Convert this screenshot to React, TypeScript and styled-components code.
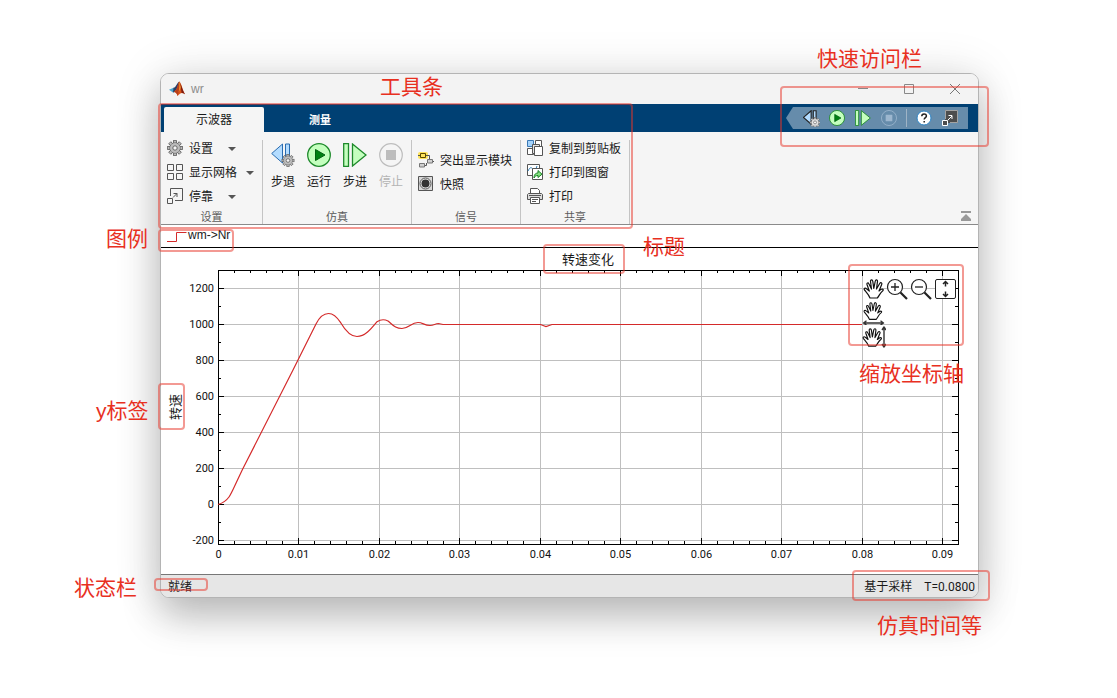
import React from "react";
import styled, { createGlobalStyle } from "styled-components";

const Global = createGlobalStyle`
  * { box-sizing: border-box; }
  body { margin: 0; background: #fff; font-family: "Liberation Sans", "Noto Sans CJK SC", sans-serif; font-size: 12px; color: #1a1a1a; }
  button { font: inherit; color: inherit; border: 0; background: none; padding: 0; cursor: pointer; }
  svg { display: block; }
`;

const Page = styled.main`
  position: relative;
  padding: 73px 138px 100px 160px;
  overflow: hidden;
`;

const Window = styled.section`
  border: 1px solid #b4b4b4;
  border-radius: 9px;
  background: #fff;
  overflow: hidden;
  box-shadow: 0 20px 38px rgba(0, 0, 0, 0.22), 0 2px 48px rgba(0, 0, 0, 0.13);
`;

const TitleBar = styled.header`
  display: flex;
  align-items: center;
  height: 30px;
  padding-left: 8px;
  gap: 6px;
  background: #f3f3f3;
`;

const WindowTitle = styled.h1`
  flex: 1;
  margin: 0;
  font-size: 12px;
  font-weight: 400;
  color: #8c8c8c;
`;

const WindowButtons = styled.div`
  display: flex;
`;

const WindowButton = styled.button`
  display: grid;
  place-items: center;
  width: 46px;
  height: 30px;
`;

const TabStrip = styled.div`
  display: flex;
  align-items: flex-end;
  height: 28px;
  padding: 0 10px 0 3px;
  background: #004073;
`;

const Tab = styled.button<{ $active?: boolean }>`
  width: ${(p) => (p.$active ? 100 : 112)}px;
  height: 25px;
  padding-bottom: 2px;
  border-radius: 2px 2px 0 0;
  background: ${(p) => (p.$active ? "#f5f5f5" : "transparent")};
  color: ${(p) => (p.$active ? "#1a1a1a" : "#fff")};
  font-size: ${(p) => (p.$active ? 12 : 11)}px;
  font-weight: ${(p) => (p.$active ? 400 : 700)};
`;

const QuickAccess = styled.div`
  display: flex;
  align-items: center;
  align-self: center;
  height: 22px;
  margin-left: auto;
  padding: 0 5px 0 12px;
  background: #668cab;
  clip-path: polygon(0 50%, 7px 0, 100% 0, 100% 100%, 7px 100%);
`;

const QuickButton = styled.button`
  display: grid;
  place-items: center;
  width: 26px;
  height: 22px;
`;

const QuickDivider = styled.span`
  width: 1px;
  height: 18px;
  margin: 0 4px;
  background: #9fb4c6;
`;

const Ribbon = styled.div`
  display: flex;
  align-items: stretch;
  height: 93px;
  background: #f5f5f5;
  border-bottom: 1px solid #8a8a8a;
`;

const Group = styled.section<{ $width: number }>`
  display: flex;
  flex-direction: column;
  width: ${(p) => p.$width}px;
  margin-top: 8px;
  border-right: 1px solid #c4c4c4;
`;

const GroupBody = styled.div<{ $pad: number; $row?: boolean }>`
  display: flex;
  flex: 1;
  flex-direction: ${(p) => (p.$row ? "row" : "column")};
  justify-content: ${(p) => (p.$row ? "flex-start" : "center")};
  margin-top: -4px;
  padding-left: ${(p) => p.$pad}px;
`;

const GroupName = styled.h2`
  height: 16px;
  margin: 0;
  line-height: 18px;
  font-size: 11px;
  font-weight: 400;
  text-align: center;
  color: #5c5c5c;
`;

const Command = styled.button`
  display: flex;
  align-items: center;
  gap: 6px;
  height: 24px;
  white-space: nowrap;
`;

const CommandLabel = styled.span`
  padding-bottom: 2px;
`;

const Caret = styled.span<{ $far?: boolean }>`
  margin: 2px 0 0 ${(p) => (p.$far ? 9 : 3)}px;
  border: 4px solid transparent;
  border-top-color: #555;
  border-bottom: 0;
`;

const BigCommand = styled.button`
  display: flex;
  flex-direction: column;
  align-items: center;
  gap: 7px;
  width: 36px;
  padding-top: 7px;
  line-height: 16px;
  white-space: nowrap;
  &:disabled { color: #b4b4b4; }
`;

const Collapse = styled.button`
  align-self: flex-end;
  margin: 0 6px 3px auto;
`;

const Legend = styled.div`
  display: flex;
  align-items: flex-start;
  height: 23px;
  padding: 3px 0 0 6px;
  line-height: 14px;
  border-bottom: 1px solid #000;
`;

const Scope = styled.figure`
  position: relative;
  display: grid;
  grid-template-columns: 30px 1fr;
  margin: 0;
`;

const ScopeTitle = styled.figcaption`
  grid-column: 2;
  padding: 2px 20px 0 27px;
  height: 20px;
  line-height: 20px;
  font-size: 13px;
  text-align: center;
`;

const AxisName = styled.span`
  align-self: center;
  justify-self: center;
  margin-bottom: 28px;
  writing-mode: vertical-rl;
  text-orientation: sideways;
  transform: rotate(180deg);
  font-size: 13px;
  line-height: 20px;
`;

const Plot = styled.svg`
  width: 100%;
  height: auto;
  overflow: visible;
  text { font-family: Roboto, "Liberation Sans", sans-serif; font-size: 11px; fill: #111; }
`;

const AxesTools = styled.div`
  position: absolute;
  top: 29px;
  right: 20px;
  display: grid;
  grid-template-columns: repeat(4, 24px);
  grid-auto-rows: 24px;
`;

const AxesTool = styled.button<{ $first?: boolean }>`
  grid-column: ${(p) => (p.$first ? 1 : "auto")};
  display: grid;
  place-items: center;
`;

const StatusBar = styled.footer`
  display: flex;
  align-items: center;
  height: 23px;
  padding: 0 3px 2px 7px;
  gap: 12px;
  border-top: 1px solid #777;
  background: #e6e6e6;
  font-family: Roboto, "Noto Sans CJK SC", sans-serif;
`;

const StatusText = styled.span<{ $grow?: boolean }>`
  flex: ${(p) => (p.$grow ? 1 : "none")};
`;

const StatusGroup = styled.div`
  display: flex;
  align-items: baseline;
  gap: 12px;
`;

type Place = { $top: number; $left?: number; $right?: number };

const Frame = styled.div<Place & { $w: number; $h: number }>`
  position: absolute;
  top: ${(p) => p.$top}px;
  ${(p) => (p.$right !== undefined ? `right: ${p.$right}px;` : `left: ${p.$left}px;`)}
  width: ${(p) => p.$w}px;
  height: ${(p) => p.$h}px;
  border: 2px solid rgba(232, 52, 40, 0.5);
  border-radius: 4px;
  pointer-events: none;
`;

const Note = styled.span<Place>`
  position: absolute;
  top: ${(p) => p.$top}px;
  ${(p) => (p.$right !== undefined ? `right: ${p.$right}px;` : `left: ${p.$left}px;`)}
  font-size: 21px;
  line-height: 28px;
  white-space: nowrap;
  color: #e8301f;
  pointer-events: none;
`;

const gearTeeth = [0, 45, 90, 135, 180, 225, 270, 315];

const GearShape = ({ cx, cy, s = 1, fill = "#bdbdbd" }: { cx: number; cy: number; s?: number; fill?: string }) => (
  <g transform={`translate(${cx} ${cy}) scale(${s})`}>
    {gearTeeth.map((a) => (
      <rect key={a} x="-1.5" y="-7.4" width="3" height="4" fill={fill} stroke="#666" strokeWidth=".9" transform={`rotate(${a})`} />
    ))}
    <circle r="5.2" fill={fill} stroke="#666" strokeWidth=".9" />
    <circle r="4.8" fill={fill} />
    <circle r="2.2" fill="#f5f5f5" stroke="#666" />
  </g>
);

const Gear = () => (
  <svg width="16" height="16" viewBox="0 0 16 16"><GearShape cx={8} cy={8} /></svg>
);

const GridIcon = () => (
  <svg width="16" height="16" fill="none" stroke="#555">
    <path d="M.5 .5h6v6h-6zM9.500 .5h6v6h-6zM.5 9.500h6v6h-6zM9.500 9.500h6v6h-6z" />
  </svg>
);

const Dock = () => (
  <svg width="16" height="16" fill="none" stroke="#555">
    <path d="M3.500 8V.5h12v12H8M.5 10.500h5v5h-5zM6 9.500l4-4M6.500 5.500H10V9" />
  </svg>
);

const StepBack = ({ size = 24, quick }: { size?: number; quick?: boolean }) => (
  <svg width={size} height={size} viewBox="0 0 24 24">
    <path d="M.7 10.500 11.500 1v19z" fill="#b3dcff" stroke={quick ? "#222" : "#2a6cb0"} strokeWidth={quick ? 1.6 : 1} />
    <path d="M14.500 1h4v14h-4z" fill="#b3dcff" stroke={quick ? "#222" : "#2a6cb0"} strokeWidth={quick ? 1.6 : 1} />
    <GearShape cx={17} cy={17.500} s={quick ? 0.95 : 0.82} fill={quick ? "#e2e2e2" : "#bdbdbd"} />
  </svg>
);

const Run = ({ size = 24 }: { size?: number }) => (
  <svg width={size} height={size} viewBox="0 0 24 24">
    <circle cx="12" cy="12" r="11.300" fill="#c4ffbe" stroke="#1e8a2b" strokeWidth="1.300" />
    <path d="M8.500 6.500v11l9.500-5.500z" fill="#008013" stroke="#006010" />
  </svg>
);

const StepForward = ({ size = 24 }: { size?: number }) => (
  <svg width={size} height={size} viewBox="0 0 24 24" fill="#c4ffbe" stroke="#1e8a2b" strokeWidth="1.300">
    <path d="M.7 .7h4.800v22.600H.7zM9.500 1v22L23 12z" />
  </svg>
);

const Stop = ({ size = 24, color = "#bdbdbd" }: { size?: number; color?: string }) => (
  <svg width={size} height={size} viewBox="0 0 24 24">
    <circle cx="12" cy="12" r="11.300" fill="none" stroke={color} strokeWidth="1.200" />
    <path d="M7 7h10v10H7z" fill={color} />
  </svg>
);

const Highlight = () => (
  <svg width="16" height="16" viewBox="0 0 16 16">
    <rect x="0" y="0" width="10" height="7" rx="2" fill="#ffe45c" />
    <path d="M0 3.500h2M8 3.500h3.500V8M15 9.500h1M6 13.500h2.500V11" fill="none" stroke="#555" />
    <path d="M2.500 1.500h5v4h-5z" fill="#ffe45c" stroke="#5a4a00" />
    <path d="M9.500 7.500h5v3.500h-5zM1.500 11.500h5v3.500h-5z" fill="#d0d0d0" stroke="#777" />
  </svg>
);

const Snapshot = () => (
  <svg width="16" height="16" viewBox="0 0 16 16">
    <path d="M.5 .5h14v14H.5z" fill="#d9d9d9" stroke="#555" />
    <circle cx="7.500" cy="7.500" r="5.500" fill="#eee" stroke="#555" />
    <circle cx="7.500" cy="7.500" r="4" fill="#333" />
  </svg>
);

const CopyIcon = () => (
  <svg width="16" height="16" viewBox="0 0 16 16" stroke="#555">
    <path d="M.5 .5h6v6h-6z" fill="#a5d3fb" stroke="#3a78b4" />
    <path d="M8.500 .5h6v6h-6zM.5 8.500h6v6h-6z" fill="#fff" />
    <path d="M5.500 4.500h7v9h-7z" fill="#e4e4e4" />
    <path d="M7.500 6.500h8v9h-8z" fill="#fff" />
  </svg>
);

const PrintFigure = () => (
  <svg width="16" height="16" viewBox="0 0 16 16" fill="none">
    <path d="M.5 .5h12v11H.5z" fill="#fff" stroke="#555" />
    <path d="M1 7c2-4 3-4 5-2s3 0 4-3" stroke="#2a7bb5" />
    <path d="M5.500 4.500h10v11h-10z" fill="#fff" stroke="#555" />
    <path d="M7 14c0-4 2-5 4-5V6.500l4 3.700-4 3.300v-2c-2 0-3 .5-4 2.500z" fill="#84e07f" stroke="#168023" />
  </svg>
);

const Printer = () => (
  <svg width="16" height="16" viewBox="0 0 16 16" stroke="#555" fill="#fff">
    <path d="M3.500 5.500v-5h7l2 2v3" />
    <path d="M1.500 5.500h13l1 1v5H.5v-5z" fill="#dcdcdc" />
    <path d="M3.500 9.500h9v6h-9zM5 11.500h6M5 13.500h4M2 7.500h12" />
  </svg>
);

const Help = () => (
  <svg width="16" height="16" viewBox="0 0 16 16">
    <circle cx="8" cy="8" r="7" fill="#fff" stroke="#2d83c4" />
    <path d="M5.800 6.200c0-3 4.600-2.900 4.600-.3 0 1.700-2.200 1.700-2.200 3.600M8.200 11v1.600" fill="none" stroke="#222" strokeWidth="1.500" />
  </svg>
);

const Undock = () => (
  <svg width="16" height="16" viewBox="0 0 16 16">
    <path d="M3 0h13v13H3z" fill="#4d4d4d" />
    <path d="M3.500 9V.5h12v12H8" fill="none" stroke="#ddd" strokeOpacity=".6" />
    <path d="M6 10l4-4M6.500 5.500H10V9" fill="none" stroke="#fff" />
    <path d="M.5 10.500h5v5h-5z" fill="#4d4d4d" stroke="#fff" />
  </svg>
);

const Logo = () => (
  <svg width="16" height="16" viewBox="0 0 16 16">
    <path d="M0 8.700 4.500 6.800 7 8.300 4 11.500z" fill="#4aa6cf" />
    <path d="M4.500 6.800C7 6.500 8 2 10.200.5L9 6 5.500 11.200 4 11.500z" fill="#2b3f66" />
    <path d="M10.200.5C12.500 2 13.500 9 16 13.200c-3-2-4.500-1.500-7.500 1.800-.5-2.200-1.500-3.500-3.500-4.200C8 9.500 9 3 10.200.5z" fill="#d95319" />
    <path d="M10.200.5C10.800 4 10.300 10 8.500 15 8 12.500 7 11.500 5 10.800 8 9.500 9 3 10.200.5z" fill="#b8401c" />
    <path d="M10.200.5c.5 3 .3 7-.5 10.500L12 6z" fill="#f7a531" />
    <path d="M11.200 2C12.500 5 13.800 10 16 13.200c-1.300-.9-2.400-1.300-3.400-1.200z" fill="#7e1c10" />
  </svg>
);

const handPath = "M7 20c-1-3-3-5-5.500-8-1-1.500.7-2.500 2-1.300L6.300 13 4 6.500C3.500 4.800 5.300 4.300 6 6l2.500 5-1-7.500C7.300 1.500 9.500 1.300 9.800 3.300l1 7L12.300 3c.4-1.800 2.400-1.400 2.200.4L13.500 11l3.200-5.500c1-1.500 2.700-.6 2 1L16 13c1-1 2-2 3.300-2 1.500.2 1 1.600 0 2.200-2 1.300-3 4.500-5 6.800z";

const Hand = ({ axis }: { axis?: "x" | "y" }) => (
  <svg width="24" height="24" viewBox="0 0 24 24" fill="#fff" stroke="#111" strokeWidth="1.200" strokeLinejoin="round">
    {axis ? (
      <g transform={axis === "x" ? "translate(1 0) scale(.92)" : "translate(0 2) scale(.96)"}><path d={handPath} /></g>
    ) : (
      <g transform="translate(1 1)"><path d={handPath} /></g>
    )}
    {axis === "x" && <path d="M1.500 22h20M4.500 19.800 1.500 22l3 2M18.500 19.800l3 2.200-3 2" fill="none" stroke="#333" strokeWidth="1.400" />}
    {axis === "y" && <path d="M22 2v20M20 5l2-3 2 3M20 19l2 3 2-3" fill="none" stroke="#333" strokeWidth="1.400" />}
  </svg>
);

const Magnifier = ({ plus }: { plus?: boolean }) => (
  <svg width="24" height="24" viewBox="0 0 24 24" fill="none" stroke="#222">
    <circle cx="9" cy="10" r="7.500" fill="#fff" strokeWidth="1.200" />
    <path d={plus ? "M5 10h8M9 6v8" : "M5 10h8"} strokeWidth="1.300" />
    <path d="M14.500 15.500 21 22" strokeWidth="2.200" />
  </svg>
);

const Fit = () => (
  <svg width="24" height="24" viewBox="0 0 24 24" fill="none" stroke="#222">
    <rect x="1.500" y="2.500" width="20" height="19" rx="1.500" fill="#fff" />
    <path d="M11.500 4.500v5M9 7l2.500-2.500L14 7M11.500 14.500v5M9 17l2.500 2.500L14 17" strokeWidth="1.500" />
  </svg>
);

const AX = { left: 27, right: 767, top: 2, bottom: 276 };
const xAt = (i: number) => Math.floor(AX.left + (i * 80.5) / 5) + 0.5;
const yAt = (v: number) => 236 - (v * 36) / 200 + 0.5;
const xSteps = Array.from({ length: 46 }, (_, i) => i);
const ySteps = Array.from({ length: 15 }, (_, i) => -200 + i * 100);

const signal =
  "M27 236.500C31 235.500 35 233 38 229C41 225 43 219 51.700 201L102 102L125 56C129 48 133 45.500 137.500 45.500C142 45.500 146 49 149.700 54.700C154 62 159 68.500 166 68.500C174 68.500 180 61 186 53.700C191 50.500 194 51.500 197 53C202 57 204 60.500 211 60.500C218 60.500 220 54.500 227 54.500C232 54.500 233 57.500 239 57.500C243 57.500 244 55.500 247.500 55.500L252 56.500H349.500L355 58.500L361 56.500H671";

const Chart = () => (
  <Plot viewBox="0 0 787 306" role="img" aria-label="转速变化">
    <g stroke="#bfbfbf" shapeRendering="crispEdges">
      {xSteps.filter((i) => i % 5 === 0 && i > 0).map((i) => <path key={i} d={`M${xAt(i)} ${AX.top}V${AX.bottom}`} />)}
      {ySteps.filter((v) => v % 200 === 0).map((v) => <path key={v} d={`M${AX.left} ${yAt(v)}H${AX.right}`} />)}
    </g>
    <g stroke="#000" fill="none" shapeRendering="crispEdges">
      <path d="M27.500 2.500H767.500V276.500H27.500z" />
      {xSteps.map((i) => {
        const n = i % 5 === 0 ? 6 : 3;
        return <path key={i} d={`M${xAt(i)} ${AX.top}v${n}M${xAt(i)} ${AX.bottom}v-${n}`} />;
      })}
      {ySteps.map((v) => {
        const n = v % 200 === 0 ? 6 : 3;
        return <path key={v} d={`M${AX.left} ${yAt(v)}h${n}M${AX.right} ${yAt(v)}h-${n}`} />;
      })}
    </g>
    <path d={signal} fill="none" stroke="#d42a2a" strokeWidth="1.200" />
    {xSteps.filter((i) => i % 5 === 0).map((i) => (
      <text key={i} x={xAt(i)} y="290" textAnchor="middle">{i === 0 ? "0" : `0.0${i / 5}`}</text>
    ))}
    {ySteps.filter((v) => v % 200 === 0).map((v) => (
      <text key={v} x="23" y={yAt(v) + 3.500} textAnchor="end">{v}</text>
    ))}
  </Plot>
);

export default function App() {
  return (
    <>
      <Global />
      <Page>
        <Window>
          <TitleBar>
            <Logo />
            <WindowTitle>wr</WindowTitle>
            <WindowButtons>
              <WindowButton aria-label="最小化"><svg width="10" height="10" stroke="#888"><path d="M0 4.500h10" /></svg></WindowButton>
              <WindowButton aria-label="最大化"><svg width="10" height="10" fill="none" stroke="#888"><path d="M.5 .5h9v9h-9z" /></svg></WindowButton>
              <WindowButton aria-label="关闭"><svg width="10" height="10" stroke="#777"><path d="M0 0l10 10M10 0 0 10" /></svg></WindowButton>
            </WindowButtons>
          </TitleBar>
          <TabStrip>
            <Tab $active>示波器</Tab>
            <Tab>测量</Tab>
            <QuickAccess>
              <QuickButton aria-label="步退"><StepBack size={17} quick /></QuickButton>
              <QuickButton aria-label="运行"><Run size={16} /></QuickButton>
              <QuickButton aria-label="步进"><StepForward size={16} /></QuickButton>
              <QuickButton aria-label="停止" disabled><Stop size={16} color="#9db7cf" /></QuickButton>
              <QuickDivider />
              <QuickButton aria-label="帮助"><Help /></QuickButton>
              <QuickButton aria-label="取消停靠"><Undock /></QuickButton>
            </QuickAccess>
          </TabStrip>
          <Ribbon>
            <Group $width={102}>
              <GroupBody $pad={6}>
                <Command><Gear /><CommandLabel>设置</CommandLabel><Caret $far /></Command>
                <Command><GridIcon /><CommandLabel>显示网格</CommandLabel><Caret /></Command>
                <Command><Dock /><CommandLabel>停靠</CommandLabel><Caret $far /></Command>
              </GroupBody>
              <GroupName>设置</GroupName>
            </Group>
            <Group $width={149}>
              <GroupBody $pad={2} $row>
                <BigCommand><StepBack />步退</BigCommand>
                <BigCommand><Run />运行</BigCommand>
                <BigCommand><StepForward />步进</BigCommand>
                <BigCommand disabled><Stop />停止</BigCommand>
              </GroupBody>
              <GroupName>仿真</GroupName>
            </Group>
            <Group $width={109}>
              <GroupBody $pad={6}>
                <Command><Highlight /><CommandLabel>突出显示模块</CommandLabel></Command>
                <Command><Snapshot /><CommandLabel>快照</CommandLabel></Command>
              </GroupBody>
              <GroupName>信号</GroupName>
            </Group>
            <Group $width={109}>
              <GroupBody $pad={6}>
                <Command><CopyIcon /><CommandLabel>复制到剪贴板</CommandLabel></Command>
                <Command><PrintFigure /><CommandLabel>打印到图窗</CommandLabel></Command>
                <Command><Printer /><CommandLabel>打印</CommandLabel></Command>
              </GroupBody>
              <GroupName>共享</GroupName>
            </Group>
            <Collapse aria-label="折叠工具条">
              <svg width="12" height="10" fill="#999"><path d="M1 0h10v2H1zM6 3l5 5v2H1V8z" /></svg>
            </Collapse>
          </Ribbon>
          <Legend>
            <svg width="21" height="14" fill="none" stroke="#d42a2a"><path d="M0 13.500h9.500v-9h10" /></svg>
            wm-&gt;Nr
          </Legend>
          <Scope>
            <ScopeTitle>转速变化</ScopeTitle>
            <AxisName>转速</AxisName>
            <Chart />
            <AxesTools>
              <AxesTool aria-label="平移"><Hand /></AxesTool>
              <AxesTool aria-label="放大"><Magnifier plus /></AxesTool>
              <AxesTool aria-label="缩小"><Magnifier /></AxesTool>
              <AxesTool aria-label="缩放坐标轴"><Fit /></AxesTool>
              <AxesTool $first aria-label="水平平移"><Hand axis="x" /></AxesTool>
              <AxesTool $first aria-label="垂直平移"><Hand axis="y" /></AxesTool>
            </AxesTools>
          </Scope>
          <StatusBar>
            <StatusText $grow>就绪</StatusText>
            <StatusGroup>
              <StatusText>基于采样</StatusText>
              <StatusText>T=0.0800</StatusText>
            </StatusGroup>
          </StatusBar>
        </Window>

        <Frame $top={103} $left={158} $w={475} $h={126} />
        <Frame $top={229} $left={158} $w={76} $h={23} />
        <Frame $top={244} $left={543} $w={82} $h={30} />
        <Frame $top={383} $left={158} $w={27} $h={47} />
        <Frame $top={578} $left={154} $w={54} $h={13} />
        <Frame $top={86} $right={128} $w={209} $h={61} />
        <Frame $top={264} $right={153} $w={116} $h={82} />
        <Frame $top={570} $right={127} $w={138} $h={31} />

        <Note $top={73} $left={380}>工具条</Note>
        <Note $top={225} $left={106}>图例</Note>
        <Note $top={233} $left={643}>标题</Note>
        <Note $top={397} $left={96}>y标签</Note>
        <Note $top={574} $left={74}>状态栏</Note>
        <Note $top={45} $right={195}>快速访问栏</Note>
        <Note $top={360} $right={153}>缩放坐标轴</Note>
        <Note $top={612} $right={135}>仿真时间等</Note>
      </Page>
    </>
  );
}
